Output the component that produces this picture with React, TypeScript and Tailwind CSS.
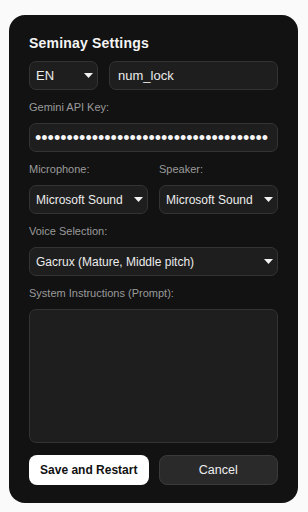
import React from "react";

function Caret() {
  return (
    <svg width="9" height="5" viewBox="0 0 9 5" className="shrink-0">
      <path d="M0 0h9L4.5 5z" fill="#f2f2f2" />
    </svg>
  );
}

function Select({ value, className = "" }: { value: string; className?: string }) {
  return (
    <div
      className={`flex h-[29px] items-center justify-between gap-[4px] rounded-[7px] border border-[#333333] bg-[#1e1e1e] pl-[6px] pr-[4px] text-[12px] text-[#ececec] ${className}`}
    >
      <span className="truncate">{value}</span>
      <Caret />
    </div>
  );
}

function Label({ children }: { children: React.ReactNode }) {
  return <div className="mt-[10px] mb-[9px] text-[11px] leading-[14px] text-[#9a9a9a]">{children}</div>;
}

export default function App() {
  const dots = "•".repeat(37);
  return (
    <div className="min-h-[512px] bg-[#fafafa] pt-[15px] pl-[9px]" style={{ fontFamily: '"Liberation Sans", Arial, sans-serif' }}>
      <div className="flex h-[488px] w-[289px] flex-col rounded-[16px] bg-[#121212] px-[20px] pt-[20px]">
        <h1 className="text-[14px] font-bold leading-[16px] tracking-[0.2px] text-[#f5f5f5]">Seminay Settings</h1>

        <div className="mt-[10px] flex gap-[11px]">
          <Select value="EN" className="w-[69px] text-[13px]" />
          <div className="flex h-[29px] flex-1 items-center rounded-[7px] border border-[#333333] bg-[#1e1e1e] px-[8px] text-[13px] text-[#ececec]">
            num_lock
          </div>
        </div>

        <Label>Gemini API Key:</Label>
        <div className="flex h-[29px] items-center overflow-hidden whitespace-nowrap rounded-[7px] border border-[#333333] bg-[#1e1e1e] pl-[5px] text-[18px] leading-none text-[#f5f5f5]">
          {dots}
        </div>

        <div className="flex gap-[11px]">
          <div className="flex w-[119px] flex-col">
            <Label>Microphone:</Label>
            <Select value="Microsoft Sound" />
          </div>
          <div className="flex w-[119px] flex-col">
            <Label>Speaker:</Label>
            <Select value="Microsoft Sound" />
          </div>
        </div>

        <Label>Voice Selection:</Label>
        <Select value="Gacrux (Mature, Middle pitch)" />

        <Label>System Instructions (Prompt):</Label>
        <div className="h-[134px] rounded-[7px] border border-[#333333] bg-[#1e1e1e]" />

        <div className="mt-[12px] flex gap-[10px]">
          <button className="h-[30px] w-[120px] rounded-[8px] bg-white text-[12px] font-bold text-[#111111]">
            Save and Restart
          </button>
          <button className="h-[30px] w-[120px] rounded-[8px] border border-[#3a3a3a] bg-[#2a2a2a] text-[12.5px] text-[#eeeeee]">
            Cancel
          </button>
        </div>
      </div>
    </div>
  );
}
